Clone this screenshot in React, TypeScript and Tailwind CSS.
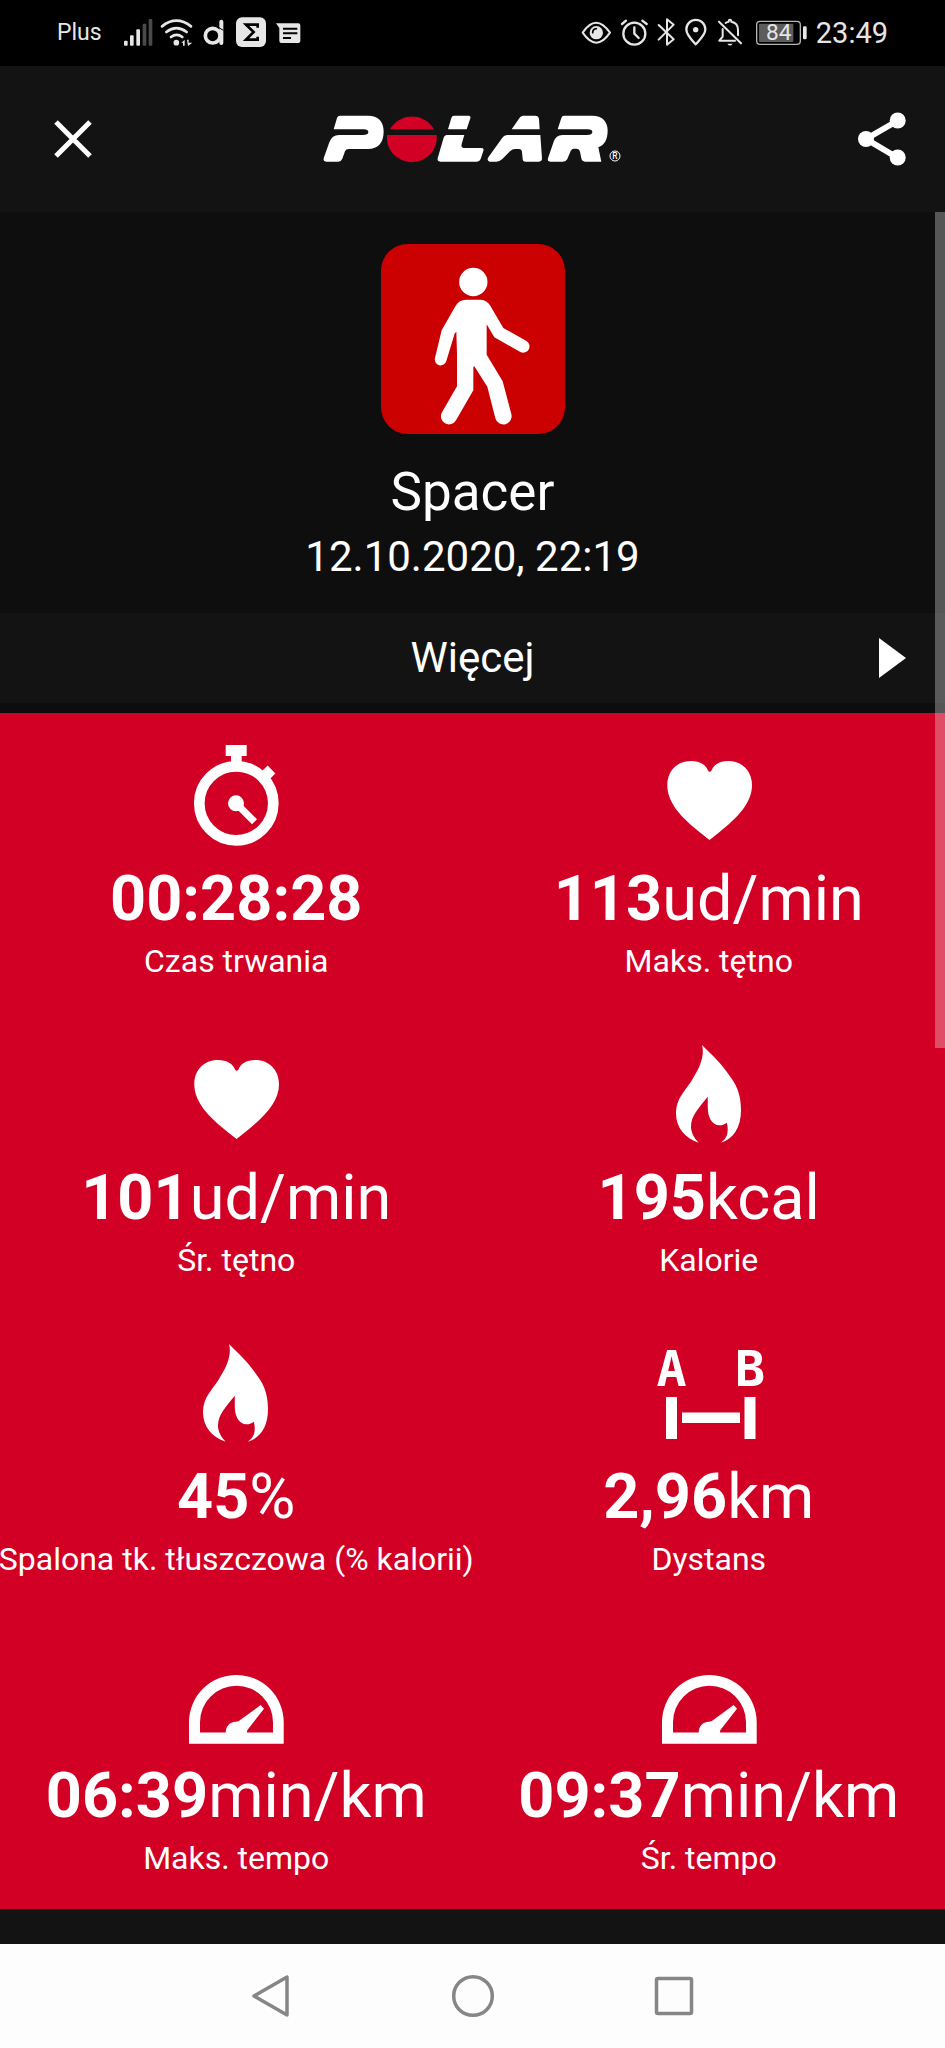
// App.tsx
import type { ReactNode } from 'react';

type IconName = 'stopwatch' | 'heart' | 'flame' | 'distance' | 'gauge';

interface Metric {
  icon: IconName;
  value: string;
  unit?: string;
  label: string;
}

const METRICS: Metric[] = [
  { icon: 'stopwatch', value: '00:28:28', label: 'Czas trwania' },
  { icon: 'heart', value: '113', unit: 'ud/min', label: 'Maks. tętno' },
  { icon: 'heart', value: '101', unit: 'ud/min', label: 'Śr. tętno' },
  { icon: 'flame', value: '195', unit: 'kcal', label: 'Kalorie' },
  { icon: 'flame', value: '45', unit: '%', label: 'Spalona tk. tłuszczowa (% kalorii)' },
  { icon: 'distance', value: '2,96', unit: 'km', label: 'Dystans' },
  { icon: 'gauge', value: '06:39', unit: 'min/km', label: 'Maks. tempo' },
  { icon: 'gauge', value: '09:37', unit: 'min/km', label: 'Śr. tempo' },
];

// All metric icons share a 100x104 canvas
const METRIC_ICONS: Record<IconName, ReactNode> = {
  stopwatch: (
    <>
      <circle cx="50.3" cy="60.3" r="37" fill="none" stroke="currentColor" strokeWidth="10.7" />
      <path d="M39.7 2h21v11h-5v10H45V13h-5.300z" />
      <path d="M76 36l9.500-9.500" stroke="currentColor" strokeWidth="11" />
      <circle cx="50" cy="60.3" r="8" />
      <path d="M50 60.300l18.500 18.500" stroke="currentColor" strokeWidth="7" />
    </>
  ),
  heart: (
    <path d="M50.500 97L41 89.500C22 74 8.300 60 8.300 42 8.300 28 18 18 32 18c9 0 15 4 17 9.500q1.500 2.500 3.500 0C54.500 22 60 18 69.500 18 83 18 93 28 93 42c0 18-14 32-33 47.500z" />
  ),
  flame: (
    <path d="M43 3c1.500 5 1 11-1 17-2 7-6 12-9 18-6 10-16 18-16 33 0 15 9 25 22.700 29.700C34 95 32 89 32 85c0-12 8-19 16.700-30.300.300 5.300-.200 9.300.3 14.300.700 8 5 14 11 14.300 3 .300 6-1.300 7.700-2.600C69 84 69 90 68 93c-1 3-3 5-6 7.700C74 97 82 86 82 68c0-18-6-27-12-35C63 22 52 12 43 3z" />
  ),
  distance: (
    <>
      <g fontFamily="'Liberation Sans Narrow', 'DejaVu Sans Mono', monospace" fontWeight="700" fontSize="50" textAnchor="middle">
        <text x="12.5" y="45">A</text>
        <text x="91" y="45">B</text>
      </g>
      <path d="M7 56h11v42H7zM85.500 56h11v42h-11zM23 71.500h58v10.500H23z" />
    </>
  ),
  gauge: (
    <>
      <path
        fillRule="evenodd"
        d="M3 103.700V82.300a47.300 47.300 0 0 1 94.700 0v21.400zM14 92.500h73V82.300a36.500 36.500 0 0 0-73 0z"
      />
      <path d="M39.700 93c0-7 4-11 10-11.300 2 0 3-.5 4.500-1.700L74.700 65l3.300 3.700-16 20.600c-1 1.200-1 2-1 3.700z" />
    </>
  ),
};

function StatusIcon({ box, className, children }: { box: string; className: string; children: ReactNode }) {
  return (
    <svg viewBox={box} className={`h-[34px] shrink-0 overflow-visible ${className}`} fill="currentColor" aria-hidden="true">
      {children}
    </svg>
  );
}

function StatusBar() {
  return (
    <div className="flex h-[66px] items-center justify-between bg-black pr-[57px] pl-[57px] text-[#e6e6e6]">
      <div className="flex items-center gap-[10px]">
        <span className="mr-3 text-[23px] leading-8">Plus</span>
        <StatusIcon box="252 48 81 102" className="w-[27px]">
          <rect x="252" y="122" width="11" height="15" rx="3" />
          <rect x="270" y="106" width="11" height="31" rx="3" />
          <rect x="289" y="88" width="11" height="49" rx="3" />
          <rect x="308" y="71" width="11" height="66" rx="3" fill="#4a4a4a" />
          <rect x="326" y="57" width="11" height="80" rx="3" fill="#4a4a4a" />
        </StatusIcon>
        <StatusIcon box="363 48 96 102" className="w-8">
          <g fill="none" stroke="currentColor" strokeWidth="8" strokeLinecap="round">
            <path d="M366 79q43-34 87 0M379 96q30-23 61 0M393 111q17-13 34 0" />
          </g>
          <circle cx="409" cy="128" r="8.500" />
          <path d="M424 128l10-9v18h-5v-9zM441 119h5v9h11l-13 10z" />
        </StatusIcon>
        <StatusIcon box="489 48 69 102" className="w-[23px]">
          <circle cx="518" cy="107" r="22" fill="none" stroke="currentColor" strokeWidth="11" />
          <path d="M544 65v64" fill="none" stroke="currentColor" strokeWidth="12" strokeLinecap="round" />
          <path d="M535 82l15 9" stroke="#000" strokeWidth="3" />
        </StatusIcon>
        <StatusIcon box="588 48 90 102" className="w-[30px]">
          <rect x="588" y="52" width="90" height="89" rx="18" />
          <path
            d="M653 83V74h-35l23 22-23 23h35v-9"
            fill="none"
            stroke="#000"
            strokeWidth="8"
          />
        </StatusIcon>
        <StatusIcon box="708 48 75 102" className="w-[25px]">
          <path d="M708 70h67q6 0 6 6v47q0 6-6 6h-51q-6 0-6-6V84z" />
          <path d="M729 86h43M729 100h43M729 114h24" stroke="#000" strokeWidth="6" />
        </StatusIcon>
      </div>

      <div className="flex items-center gap-[9px]">
        <StatusIcon box="33 48 90 102" className="w-[30px]">
          <path d="M38 98q40-60 82 0-41 60-82 0z" fill="none" stroke="currentColor" strokeWidth="6" strokeLinejoin="round" />
          <circle cx="79" cy="98" r="20" />
          <path d="M68 98q0-11 11-12" fill="none" stroke="#000" strokeWidth="5" strokeLinecap="round" />
        </StatusIcon>
        <StatusIcon box="150 48 84 102" className="w-7">
          <g fill="none" stroke="currentColor" strokeWidth="7" strokeLinecap="round" strokeLinejoin="round">
            <circle cx="193" cy="101" r="33" />
            <path d="M193 82v19l13 13M156 72l12-10M217 62l13 10" />
          </g>
        </StatusIcon>
        <StatusIcon box="261 48 57 102" className="w-[19px]">
          <path
            d="M266 75l45 43-20 16V58l20 16-45 45"
            fill="none"
            stroke="currentColor"
            strokeWidth="6"
            strokeLinejoin="round"
            strokeLinecap="round"
          />
        </StatusIcon>
        <StatusIcon box="345 48 69 102" className="w-[23px]">
          <path
            d="M377 133c-11-13-28-27-28-45a28 28 0 0 1 57 0c0 18-18 32-29 45z"
            fill="none"
            stroke="currentColor"
            strokeWidth="7"
            strokeLinejoin="round"
          />
          <circle cx="377" cy="89" r="8" />
        </StatusIcon>
        <StatusIcon box="441 48 90 102" className="w-[30px]">
          <g fill="none" stroke="currentColor" strokeWidth="6" strokeLinecap="round" strokeLinejoin="round">
            <path d="M447 65l66 65M495 122h-47l10-12V87M467 69q5-4 9-4 0-6 4-6t4 6q20 4 20 24v17" />
          </g>
          <path d="M472 131h16q-8 11-16 0z" />
        </StatusIcon>
        <StatusIcon box="558 48 153 102" className="w-[51px]">
          <rect x="560" y="64" width="131" height="69" rx="10" fill="none" stroke="#b5b5b5" strokeWidth="4" />
          <rect x="567" y="71" width="103" height="55" rx="3" fill="#5c5c5c" />
          <rect x="699" y="79" width="11" height="39" rx="4" />
          <text x="626" y="121" fontSize="68" textAnchor="middle">
            84
          </text>
        </StatusIcon>
        <span className="text-[29px] leading-8">23:49</span>
      </div>
    </div>
  );
}

function PolarLogo() {
  return (
    <svg viewBox="70 70 900 156" className="h-[52px] w-[300px]" fill="#fff" role="img" aria-label="Polar">
      <path d="M121 78H205C235 78 252 95 252 125C252 160 235 178 205 178H147Q139 178 136 185L128 207Q124 216 116 216H80Q70 216 72 206L89 158Q97 136 118 136H190Q206 136 206 128Q206 119 192 119H102L112 85Q114 78 121 78Z" />
      <g fill="#d10024">
        <path d="M271 119a75 73 0 0 1 132 0z" />
        <path d="M262 136h149a75 73 0 1 1-149 0z" />
      </g>
      <path d="M463 78H507Q514 79 512 86L501 119H445L455 85Q457 78 463 78Z" />
      <path d="M442 136H494L486 163Q483 175 494 175H545Q554 175 551 184L543 208Q540 216 531 216H422Q412 216 414 206L431 147Q434 136 442 136Z" />
      <path d="M670 78H706Q717 78 718 88L720 119H636L661 83Q665 78 670 78Z" />
      <path d="M624 136H722L727 206Q727 216 718 216H678Q669 216 669 207L667 188Q666 178 658 178H646Q638 178 631 185L608 208Q600 216 590 216H570Q560 213 566 203L607 146Q614 136 624 136Z" />
      <path d="M793 78H878C908 78 924 96 924 122C924 150 915 166 896 173L905 216H856Q847 216 845 206L841 186Q839 177 830 177H823Q816 177 813 184L803 208Q799 216 790 216H752Q742 216 745 206L762 156Q769 136 788 136H862Q878 136 878 127Q878 119 864 119H774L785 85Q787 78 793 78Z" />
      <circle cx="946" cy="199" r="15" fill="none" stroke="#fff" strokeWidth="3" />
      <text x="946" y="208" fontSize="25" fontWeight="500" textAnchor="middle">
        R
      </text>
    </svg>
  );
}

function Header() {
  return (
    <header className="flex h-[146px] items-center justify-between bg-[#131313] px-9">
      <button type="button" aria-label="Zamknij" className="w-[74px]">
        <svg viewBox="0 0 74 56" className="h-14 w-[74px]" stroke="#fff" strokeWidth="5">
          <path d="M20 11l34 34M54 11L20 45" />
        </svg>
      </button>
      <PolarLogo />
      <button type="button" aria-label="Udostępnij" className="w-[74px]">
        <svg viewBox="0 0 74 56" className="h-14 w-[74px]" fill="#fff">
          <path d="M63 9.500L31 28l32 19" fill="none" stroke="#fff" strokeWidth="6" />
          <circle cx="62.700" cy="9.500" r="8" />
          <circle cx="31" cy="28" r="8" />
          <circle cx="62.700" cy="46.500" r="8" />
        </svg>
      </button>
    </header>
  );
}

function WalkingTile() {
  return (
    <svg viewBox="61 71 552 570" className="h-[190px] w-[184px]" fill="#fff" aria-hidden="true">
      <rect x="61" y="71" width="552" height="570" rx="80" fill="#cb0000" />
      <circle cx="338" cy="185" r="42.500" />
      <path d="M316 238h42q20 0 30 17l40 68 68 38a18 18 0 0 1-17 34l-78-44-23-39v91l48 80 26 98a24 24 0 0 1-48 13l-24-95-38-60q-4-3-4 4v67l-52 90a24 24 0 0 1-42-24l45-78V400l-2-66q-6 3-7 12l-23 76a17 17 0 0 1-34-9l20-83 42-74q10-18 31-18z" />
    </svg>
  );
}

function Summary() {
  return (
    <section className="flex flex-col items-center bg-[#0e0e0e] pt-8 pb-[30px]">
      <WalkingTile />
      <h1 className="mt-[26px] text-[53px] leading-16">Spacer</h1>
      <p className="mt-[7px] text-[42px] leading-[52px]">12.10.2020, 22:19</p>
    </section>
  );
}

function MetricCell({ icon, value, unit, label }: Metric) {
  return (
    <div className="flex h-[299px] flex-col items-center pt-[30px] whitespace-nowrap">
      <svg viewBox="0 0 100 104" className="h-[104px] w-[100px] overflow-visible" fill="currentColor" aria-hidden="true">
        {METRIC_ICONS[icon]}
      </svg>
      <p className="mt-3.5 text-[63px] leading-[76px]">
        <span className="font-bold">{value}</span>
        {unit}
      </p>
      <p className="mt-1 text-[32px] leading-10">{label}</p>
    </div>
  );
}

function NavBar() {
  return (
    <nav className="mt-auto flex h-[104px] items-center justify-center gap-[157px] bg-[#fdfdfd]">
      <button type="button" aria-label="Wstecz">
        <svg viewBox="0 0 44 44" className="size-11" fill="none" stroke="#868686" strokeWidth="3.500" strokeLinejoin="round">
          <path d="M37 3v38L4 22z" />
        </svg>
      </button>
      <button type="button" aria-label="Ekran główny">
        <svg viewBox="0 0 44 44" className="size-11" fill="none" stroke="#868686" strokeWidth="3.500">
          <circle cx="22" cy="22" r="19.300" />
        </svg>
      </button>
      <button type="button" aria-label="Ostatnie">
        <svg viewBox="0 0 44 44" className="size-11" fill="none" stroke="#868686" strokeWidth="3.500">
          <rect x="4.500" y="4.500" width="35" height="35" rx="1.500" />
        </svg>
      </button>
    </nav>
  );
}

export default function App() {
  return (
    <div className="flex min-h-screen flex-col bg-[#131313] font-[Roboto,sans-serif] text-white">
      <StatusBar />
      <Header />
      <main className="relative">
        <Summary />
        <button type="button" className="grid h-[90px] w-full grid-cols-[1fr_auto_1fr] items-center bg-[#131313] text-[42px] leading-[52px]">
          <span className="col-start-2">Więcej</span>
          <svg viewBox="0 0 27 40" className="mr-[39px] h-10 w-[27px] justify-self-end" fill="#fff" aria-hidden="true">
            <path d="M0 0l27 20L0 40z" />
          </svg>
        </button>
        <div className="h-[10px] bg-[#0d0d0f]" />
        <section className="grid grid-cols-2 bg-[#d10024]">
          {METRICS.map((metric) => (
            <MetricCell key={metric.value} {...metric} />
          ))}
        </section>
        {/* Scroll indicator */}
        <div className="absolute top-0 right-0 h-[836px] w-[10px] bg-white/30" />
      </main>
      <NavBar />
    </div>
  );
}
